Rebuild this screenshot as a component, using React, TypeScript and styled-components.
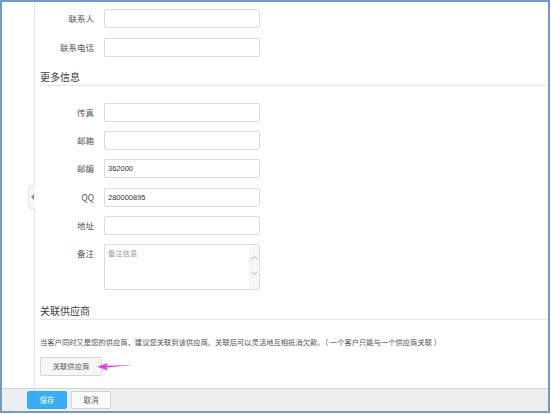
import React from "react";
import styled, { createGlobalStyle } from "styled-components";

const Global = createGlobalStyle`
  html, body { margin: 0; padding: 0; background: #ffffff; }
  body { width: 551px; height: 414px; overflow: hidden; font-family: "Noto Sans CJK SC", "Noto Sans", sans-serif; }
  * { box-sizing: border-box; }
`;

const Frame = styled.div`
  width: 550px;
  height: 413px;
  border: 2px solid #6f9dc6;
  display: flex;
  flex-direction: column;
  background: #ffffff;
`;

const Main = styled.div`
  flex: 1;
  display: flex;
  min-height: 0;
  overflow: hidden;
`;

const Rail = styled.div`
  width: 33px;
  flex: none;
  border-right: 1px solid #e3e5e8;
  position: relative;
`;

const CollapseTab = styled.div`
  position: absolute;
  left: 26px;
  top: 183px;
  width: 7px;
  height: 24px;
  border: 1px solid #e2e2e2;
  border-right: none;
  border-radius: 4px 0 0 4px;
  background: #f6f6f6;
  display: flex;
  align-items: center;
  justify-content: center;
`;

const Triangle = styled.span`
  width: 0;
  height: 0;
  border-top: 3px solid transparent;
  border-bottom: 3px solid transparent;
  border-right: 3px solid #8a8a8a;
  margin-left: 1px;
`;

const Content = styled.div`
  flex: 1;
  padding: 7px 0 0 5px;
  display: flex;
  flex-direction: column;
`;

const Rows = styled.div<{ $top?: number; $gap?: number }>`
  display: flex;
  flex-direction: column;
  gap: ${(p) => p.$gap ?? 10}px;
  margin-top: ${(p) => p.$top ?? 0}px;
`;

const Row = styled.div<{ $align?: string }>`
  display: flex;
  align-items: ${(p) => p.$align ?? "center"};
  gap: 10px;
`;

const Label = styled.div`
  width: 54px;
  text-align: right;
  font-size: 8.5px;
  line-height: 19px;
  color: #555555;
  white-space: nowrap;
`;

const Input = styled.div`
  width: 156px;
  height: 19px;
  border: 1px solid #dcdcdc;
  border-radius: 2px;
  background: #ffffff;
  font-family: "Liberation Sans", "Noto Sans CJK SC", sans-serif;
  font-size: 7.5px;
  line-height: 17px;
  padding-left: 3px;
  color: #333333;
`;

const TextArea = styled.div`
  width: 156px;
  height: 46px;
  border: 1px solid #dcdcdc;
  border-radius: 2px;
  display: flex;
`;

const Placeholder = styled.div`
  flex: 1;
  font-size: 7.3px;
  line-height: 12px;
  padding: 2px 0 0 3px;
  color: #999999;
`;

const ScrollBar = styled.div`
  width: 10px;
  background: #f7f7f7;
  display: flex;
  flex-direction: column;
  align-items: center;
  padding-top: 11px;
  gap: 11px;
`;

const Heading = styled.div<{ $top: number }>`
  margin-top: ${(p) => p.$top}px;
  font-size: 10px;
  line-height: 12px;
  color: #3c3c3c;
  padding-bottom: 2px;
  border-bottom: 1px solid #e6e6e6;
`;

const Desc = styled.div`
  margin-top: 15.5px;
  font-size: 7.3px;
  line-height: 12px;
  color: #4f4f4f;
  white-space: nowrap;
`;

const LinkWrap = styled.div`
  margin-top: 9px;
  position: relative;
  width: 62px;
`;

const GhostButton = styled.div`
  width: 62px;
  height: 19px;
  border: 1px solid #d6d6d6;
  border-radius: 2px;
  background: #f6f6f6;
  font-size: 7.3px;
  line-height: 17px;
  text-align: center;
  color: #555555;
`;

const Pointer = styled.svg`
  position: absolute;
  left: 57px;
  top: 5px;
`;

const Footer = styled.div`
  height: 23px;
  flex: none;
  border-top: 1px solid #cfd4da;
  background: #eceef1;
  display: flex;
  align-items: center;
  gap: 4px;
  padding-left: 25px;
`;

const FooterButton = styled.div<{ $primary?: boolean }>`
  width: 40px;
  height: 18px;
  border-radius: 2px;
  border: 1px solid ${(p) => (p.$primary ? "#33aaf2" : "#d3d3d3")};
  background: ${(p) => (p.$primary ? "#36adf5" : "#fbfbfb")};
  color: ${(p) => (p.$primary ? "#ffffff" : "#555555")};
  font-size: 7.5px;
  line-height: 16px;
  text-align: center;
`;

const Chevron = ({ up }: { up?: boolean }) => (
  <svg width="7" height="4" viewBox="0 0 7 4">
    <polyline
      points={up ? "0.5,3.5 3.5,0.5 6.5,3.5" : "0.5,0.5 3.5,3.5 6.5,0.5"}
      fill="none"
      stroke="#a8a8a8"
      strokeWidth="0.9"
    />
  </svg>
);

const fields1 = [
  { label: "联系人", value: "" },
  { label: "联系电话", value: "" },
];

const fields2 = [
  { label: "传真", value: "" },
  { label: "邮箱", value: "" },
  { label: "邮编", value: "362000" },
  { label: "QQ", value: "280000895" },
  { label: "地址", value: "" },
];

export default function App() {
  return (
    <>
      <Global />
      <Frame>
        <Main>
          <Rail>
            <CollapseTab>
              <Triangle />
            </CollapseTab>
          </Rail>
          <Content>
            <Rows $gap={10}>
              {fields1.map((f) => (
                <Row key={f.label}>
                  <Label>{f.label}</Label>
                  <Input>{f.value}</Input>
                </Row>
              ))}
            </Rows>
            <Heading $top={13.5}>更多信息</Heading>
            <Rows $gap={9.2} $top={17.5}>
              {fields2.map((f) => (
                <Row key={f.label}>
                  <Label>{f.label}</Label>
                  <Input>{f.value}</Input>
                </Row>
              ))}
              <Row $align="flex-start">
                <Label>备注</Label>
                <TextArea>
                  <Placeholder>备注信息</Placeholder>
                  <ScrollBar>
                    <Chevron up />
                    <Chevron />
                  </ScrollBar>
                </TextArea>
              </Row>
            </Rows>
            <Heading $top={15.5}>关联供应商</Heading>
            <Desc>
              当客户同时又是您的供应商，建议您关联到该供应商。关联后可以灵活地互相抵消欠款。（ 一个客户只能与一个供应商关联 ）
            </Desc>
            <LinkWrap>
              <GhostButton>关联供应商</GhostButton>
              <Pointer width="38" height="9" viewBox="0 0 38 9">
                <polygon
                  points="0,4.8 11,1 9.5,3.8 37,3 9.5,5.6 11,8.6"
                  fill="#ef3be4"
                />
              </Pointer>
            </LinkWrap>
          </Content>
        </Main>
        <Footer>
          <FooterButton $primary>保存</FooterButton>
          <FooterButton>取消</FooterButton>
        </Footer>
      </Frame>
    </>
  );
}
